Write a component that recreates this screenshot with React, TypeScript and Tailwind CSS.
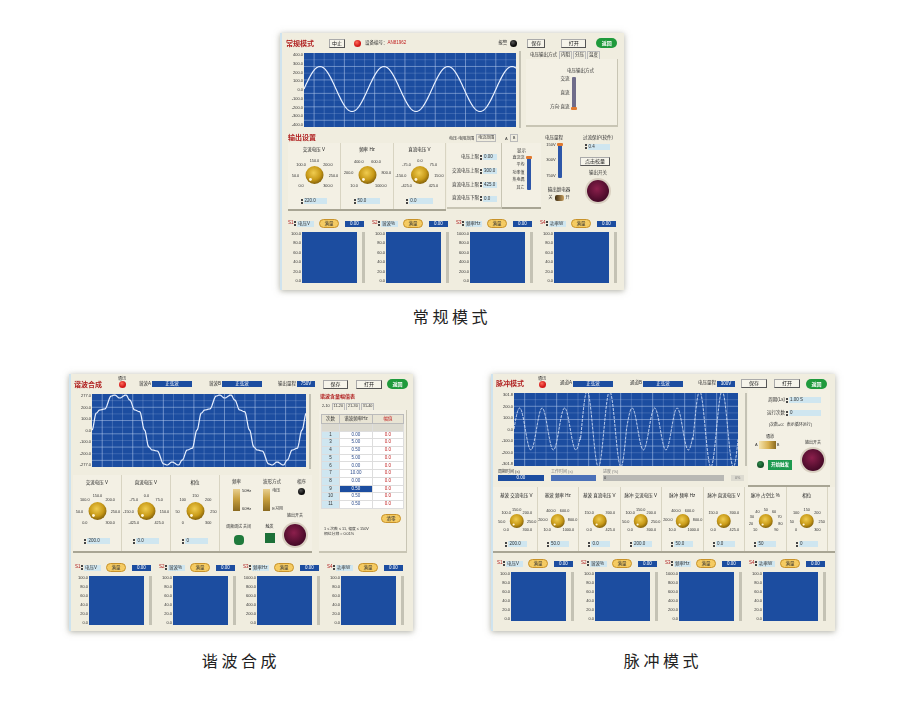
import React from 'react';

const AXIS_GAUGE = ['100.0', '80.0', '60.0', '40.0', '20.0', '0.0'];

const Spin = ({ w, value }: { w: number; value: string }) => (
  <div className="flex items-center gap-[1px] h-[6px]">
    <div className="flex flex-col gap-[1px]">
      <span className="block w-[2px] h-[2px] bg-[#444]" />
      <span className="block w-[2px] h-[2px] bg-[#444]" />
    </div>
    <div className="h-[6px] bg-[#cfe6f0] text-[4.5px] leading-[6px] pl-[1px] text-[#333] overflow-hidden" style={{ width: w }}>
      {value}
    </div>
  </div>
);

const Btn = ({ label, w }: { label: string; w: number }) => (
  <div
    className="h-[9px] bg-[#f6f4ea] border border-[#555] border-l-[#aaa] border-t-[#aaa] text-[5px] leading-[7px] text-center text-[#222]"
    style={{ width: w }}
  >
    {label}
  </div>
);

const Back = () => (
  <div className="w-[21px] h-[10px] rounded-full bg-[#1f9a3c] text-white text-[5px] leading-[10px] text-center font-bold">返回</div>
);

const Led = ({ color = 'red' }: { color?: 'red' | 'black' | 'green' }) => (
  <div
    className={`w-[7px] h-[7px] rounded-full shrink-0 ${
      color === 'red'
        ? 'bg-[radial-gradient(circle_at_40%_35%,#ff6a5a,#d01818_60%)]'
        : color === 'green'
          ? 'bg-[radial-gradient(circle_at_40%_35%,#2e8a4a,#0f4a24_70%)]'
          : 'bg-[radial-gradient(circle_at_40%_35%,#555,#0a0a0a_60%)]'
    }`}
  />
);

const BlueBox = ({ w, label }: { w: number; label: string }) => (
  <div className="h-[6px] bg-[#1c4da0] text-white text-[4.5px] leading-[6px] text-center" style={{ width: w }}>
    {label}
  </div>
);

const Pill = ({ label }: { label: string }) => (
  <div className="w-[20px] h-[9px] rounded-full bg-[#f5cb62] border border-[#c8922a] text-[4.5px] leading-[7px] text-center text-[#333]">
    {label}
  </div>
);

const Stop = () => (
  <div className="w-[22px] h-[22px] rounded-full bg-[radial-gradient(circle_at_45%_40%,#8c1f4c,#470a28_70%)] shadow-[0_0_0_2px_#d8cfc0]" />
);

const Title = ({ text }: { text: string }) => (
  <span className="text-[#b02020] text-[7px] font-bold leading-none whitespace-nowrap">{text}</span>
);

const Axis = ({ labels, w }: { labels: string[]; w: number }) => (
  <div className="flex flex-col justify-between items-end pr-[1px] text-[4px] leading-none text-[#333] shrink-0" style={{ width: w }}>
    {labels.map((l, i) => (
      <span key={i}>{l}</span>
    ))}
  </div>
);

const Scope = ({ w, h, wave, dashed }: { w: number; h: number; wave: (x: number) => number; dashed?: boolean }) => {
  const vCount = 20;
  const hCount = 10;
  const pts: string[] = [];
  for (let x = 0; x <= w; x += 0.5) pts.push(`${x},${wave(x).toFixed(2)}`);
  return (
    <svg width={w} height={h} className="block shrink-0 bg-[#1c4da0]">
      {Array.from({ length: vCount }, (_, i) => {
        const x = ((i + 1) * w) / (vCount + 1);
        return <line key={i} x1={x} x2={x} y1={0} y2={h} stroke="#bcd0f0" strokeOpacity={i % 3 === 0 ? 0.75 : 0.35} strokeWidth={0.7} />;
      })}
      {Array.from({ length: hCount }, (_, i) => {
        const y = ((i + 1) * h) / (hCount + 1);
        return <line key={i} x1={0} x2={w} y1={y} y2={y} stroke="#bcd0f0" strokeOpacity={i % 2 === 1 ? 0.7 : 0.3} strokeWidth={0.7} />;
      })}
      <polyline
        points={pts.join(' ')}
        fill="none"
        stroke="#e8f0ff"
        strokeWidth={dashed ? 0.8 : 1.2}
        strokeDasharray={dashed ? '3 1' : undefined}
      />
    </svg>
  );
};

const Knob = ({
  title,
  labels,
  value,
  w,
  svgH,
  r,
  rx,
  ry,
  titleH,
  panelH,
}: {
  title: string;
  labels: string[];
  value: string;
  w: number;
  svgH: number;
  r: number;
  rx: number;
  ry: number;
  titleH: number;
  panelH: number;
}) => {
  const cx = w / 2;
  const cy = svgH / 2;
  return (
    <div className="flex flex-col items-center shrink-0 border-r border-[#d8d4c2]" style={{ width: w, height: panelH }}>
      <div className="text-[4.5px] text-[#222] flex items-center justify-center whitespace-nowrap" style={{ height: titleH }}>
        {title}
      </div>
      <svg width={w} height={svgH} className="block overflow-visible">
        <defs>
          <radialGradient id="gold" cx="45%" cy="38%" r="65%">
            <stop offset="0%" stopColor="#f0cc50" />
            <stop offset="60%" stopColor="#c89a18" />
            <stop offset="100%" stopColor="#7c5a08" />
          </radialGradient>
        </defs>
        {labels.map((l, i) => {
          const a = ((-135 + (270 * i) / (labels.length - 1)) * Math.PI) / 180;
          return (
            <text key={i} x={cx + rx * Math.sin(a)} y={cy - ry * Math.cos(a) + 1.5} fontSize={3.8} fill="#333" textAnchor="middle">
              {l}
            </text>
          );
        })}
        <circle cx={cx} cy={cy} r={r} fill="url(#gold)" />
        <circle cx={cx - r * 0.45} cy={cy + r * 0.5} r={r * 0.16} fill="#fff6d8" />
      </svg>
      <div className="flex-1 flex items-center">
        <Spin w={w * 0.45} value={value} />
      </div>
    </div>
  );
};

const VSlider = ({ h, track, thumb }: { h: number; track: string; thumb: 'top' | 'bottom' }) => (
  <div className={`w-[4px] rounded-[1px] flex ${thumb === 'top' ? 'items-start' : 'items-end'} justify-center ${track}`} style={{ height: h }}>
    <span className="block w-[6px] h-[3px] rounded-[1px] bg-[#e07a30] shrink-0" />
  </div>
);

const Gauge = ({ name, field, value, axis, plotH, axisW }: { name: string; field: string; value: string; axis: string[]; plotH: number; axisW: number }) => (
  <div className="w-[84px] shrink-0 flex flex-col">
    <div className="flex items-center h-[17px] gap-[1px]">
      <span className="text-[4.5px] text-[#b02020] w-[7px] pl-[2px]">{name}</span>
      <Spin w={17} value={field} />
      <span className="ml-[4px]">
        <Pill label="满量" />
      </span>
      <span className="ml-[5px]">
        <BlueBox w={19} label={value} />
      </span>
    </div>
    <div className="flex" style={{ height: plotH }}>
      <Axis labels={axis} w={axisW} />
      <div className="w-[55px] bg-[#1c4da0] shrink-0" />
      <div className="w-[3px] bg-[#c4c2b4] ml-[5px]" />
    </div>
  </div>
);

const GaugeRow = ({ pad, top, plotH, axisW }: { pad: number; top: number; plotH: number; axisW: number }) => (
  <div className="flex" style={{ paddingLeft: pad, marginTop: top }}>
    <Gauge name="S1" field="电压V" value="0.00" axis={AXIS_GAUGE} plotH={plotH} axisW={axisW} />
    <Gauge name="S2" field="谐波%" value="0.00" axis={AXIS_GAUGE} plotH={plotH} axisW={axisW} />
    <Gauge name="S3" field="频率Hz" value="0.00" axis={['1000.0', '800.0', '600.0', '400.0', '200.0', '0.0']} plotH={plotH} axisW={axisW} />
    <Gauge name="S4" field="功率W" value="0.00" axis={['100.0', '80.0', '60.0', '40.0', '20.0', '0.0']} plotH={plotH} axisW={axisW} />
  </div>
);

const Frame = ({ children }: { children: React.ReactNode }) => (
  <div className="w-[344px] h-[257px] bg-[#f0eddf] border-l-2 border-[#cfe3ee] shadow-[0_1px_6px_rgba(110,110,90,0.55)] blur-[0.45px] overflow-hidden text-[#333] shrink-0">
    {children}
  </div>
);

const LabelSpin = ({ label, value, w }: { label: string; value: string; w: number }) => (
  <div className="flex items-center justify-end gap-[1px]">
    <span className="text-[4.5px] whitespace-nowrap">{label}</span>
    <Spin w={w} value={value} />
  </div>
);

const VOLT = ['0.0', '50.0', '100.0', '150.0', '200.0', '250.0', '300.0'];
const FREQ = ['10.0', '200.0', '400.0', '600.0', '800.0', '1000.0'];

const NormalMode = () => (
  <Frame>
    <div className="h-[20px] flex items-center pl-[4px]">
      <Title text="常规模式" />
      <span className="ml-[15px]">
        <Btn label="中止" w={16} />
      </span>
      <span className="ml-[9px]">
        <Led />
      </span>
      <span className="ml-[4px] text-[4.5px] whitespace-nowrap">
        设备编号：<span className="text-[#c02020]">AN81962</span>
      </span>
      <span className="ml-[92px] text-[4.5px]">报警</span>
      <span className="ml-[3px]">
        <Led color="black" />
      </span>
      <span className="ml-[10px]">
        <Btn label="保存" w={18} />
      </span>
      <span className="ml-[16px]">
        <Btn label="打开" w={25} />
      </span>
      <span className="ml-[10px]">
        <Back />
      </span>
    </div>
    <div className="flex h-[74px]">
      <Axis labels={['400.0', '300.0', '200.0', '100.0', '0.0', '-100.0', '-200.0', '-300.0', '-400.0']} w={22} />
      <Scope w={212} h={74} wave={x => 36 - 22.5 * Math.sin((2 * Math.PI * x) / 64)} />
      <div className="w-[2px] h-[77px] bg-[#c4c2b4] ml-[3px] -mt-[2px]" />
      <div className="w-[92px] h-[77px] -mt-[3px] ml-[5px] flex flex-col">
        <div className="flex items-end h-[9px] text-[4.5px] gap-[1px] pl-[3px] whitespace-nowrap">
          <span className="px-[1px]">电压输出方式</span>
          <span className="px-[1px] border border-b-0 border-[#bbb]">内阻</span>
          <span className="px-[1px] border border-b-0 border-[#bbb]">分压</span>
          <span className="px-[1px] border border-b-0 border-[#bbb]">温度</span>
        </div>
        <div className="flex-1 bg-[#f3f0e4] border-b-2 border-r border-[#c8c5b4] flex flex-col pt-[9px]">
          <span className="text-[4.5px] ml-[41px] self-start">电压输出方式</span>
          <div className="flex gap-[2px] mt-[2px] ml-[24px] self-start">
            <div className="flex flex-col justify-between items-end text-[4.5px] h-[33px] leading-none">
              <span>交流</span>
              <span>直流</span>
              <span>方向·直流</span>
            </div>
            <VSlider h={33} track="bg-[#6f6c8a]" thumb="bottom" />
          </div>
        </div>
      </div>
    </div>
    <div className="flex pl-[6px] mt-[4px] h-[80px]">
      <div className="w-[158px] shrink-0">
        <div className="h-[12px] flex items-center">
          <Title text="输出设置" />
        </div>
        <div className="flex bg-[#f3f0e4] border-b-2 border-[#a8a594]">
          <Knob title="交流电压 V" labels={VOLT} value="220.0" w={53} svgH={36} r={9} rx={19} ry={15} titleH={14} panelH={66} />
          <Knob title="频率 Hz" labels={FREQ} value="50.0" w={53} svgH={36} r={9} rx={19} ry={15} titleH={14} panelH={66} />
          <Knob title="直流电压 V" labels={['-425.0', '-150.0', '-75.0', '0.0', '75.0', '150.0', '425.0']} value="0.0" w={52} svgH={36} r={9} rx={19} ry={15} titleH={14} panelH={66} />
        </div>
      </div>
      <div className="w-[55px] ml-[1px] shrink-0">
        <div className="h-[12px] flex items-end text-[4px] gap-[2px] pb-[1px] whitespace-nowrap pl-[2px]">
          <span>电压·电阻范围</span>
          <span className="border border-[#bbb] px-[1px]">电流范围</span>
        </div>
        <div className="h-[66px] bg-[#f3f0e4] border-b-2 border-r border-[#c8c5b4] flex flex-col gap-[7px] pt-[11px] pr-[4px]">
          <LabelSpin label="电压上限" value="0.00" w={14} />
          <LabelSpin label="交流电压上限" value="300.0" w={14} />
          <LabelSpin label="直流电压上限" value="425.0" w={14} />
          <LabelSpin label="直流电压下限" value="0.0" w={14} />
        </div>
      </div>
      <div className="w-[39px] shrink-0">
        <div className="h-[12px] flex items-end text-[4px] gap-[2px] pb-[1px] pl-[3px]">
          <span>A</span>
          <span className="border border-[#bbb] px-[2px]">B</span>
        </div>
        <div className="h-[66px] bg-[#f3f0e4] border-b-2 border-[#a8a594] flex flex-col items-center pt-[5px]">
          <span className="text-[4.5px]">显示</span>
          <div className="flex gap-[2px] mt-[1px]">
            <div className="flex flex-col justify-between items-end text-[4px] h-[34px] leading-none">
              <span>直流流</span>
              <span>平均</span>
              <span>功率值</span>
              <span>热电偶</span>
              <span>其它</span>
            </div>
            <VSlider h={34} track="bg-[#2d56a8]" thumb="top" />
          </div>
        </div>
      </div>
      <div className="flex-1 flex pt-[4px]">
        <div className="w-[26px] flex flex-col items-center">
          <span className="text-[4.5px] whitespace-nowrap">电压量程</span>
          <div className="flex gap-[2px] mt-[1px]">
            <div className="flex flex-col justify-between items-end text-[4px] h-[35px] leading-none">
              <span>150V</span>
              <span>300V</span>
              <span>750V</span>
            </div>
            <VSlider h={35} track="bg-[#2d56a8]" thumb="top" />
          </div>
          <span className="text-[4.5px] mt-[9px] ml-[10px] whitespace-nowrap">输出继电器</span>
          <div className="flex items-center gap-[2px] text-[4px] mt-[1px] ml-[10px]">
            <span>关</span>
            <span className="block w-[9px] h-[6px] rounded-[2px] bg-[linear-gradient(90deg,#3a2a10,#c8a060)] shrink-0" />
            <span>开</span>
          </div>
        </div>
        <div className="flex-1 flex flex-col items-center pl-[5px]">
          <span className="text-[4.5px] whitespace-nowrap">过流保护(软件)</span>
          <span className="mt-[2px] -ml-[2px]">
            <Spin w={22} value="0.4" />
          </span>
          <span className="mt-[7px] -ml-[6px]">
            <Btn label="点击校量" w={30} />
          </span>
          <span className="text-[4.5px] mt-[4px]">输出开关</span>
          <span className="mt-[3px]">
            <Stop />
          </span>
        </div>
      </div>
    </div>
    <GaugeRow pad={4} top={4} plotH={51} axisW={16} />
  </Frame>
);

const HARMONICS = [
  ['', '', ''],
  ['1', '0.00', '0.0'],
  ['3', '5.00', '0.0'],
  ['4', '0.50', '0.0'],
  ['5', '5.00', '0.0'],
  ['6', '0.00', '0.0'],
  ['7', '10.00', '0.0'],
  ['8', '0.00', '0.0'],
  ['9', '0.50', '0.0'],
  ['10', '0.50', '0.0'],
  ['11', '0.50', '0.0'],
];

const Toggle = ({ a, b }: { a: string; b: string }) => (
  <div className="flex items-stretch gap-[2px] h-[22px]">
    <div className="w-[7px] bg-[linear-gradient(180deg,#e8cf90_0%,#c8a040_45%,#8a6a20_100%)]" />
    <div className="flex flex-col justify-between text-[4px] leading-none">
      <span>{a}</span>
      <span>{b}</span>
    </div>
  </div>
);

// half cycle of the composite wave, read off the screenshot as [x, y] in plot pixels
const HALF_WAVE = [
  [0, 36],
  [4.3, 19],
  [7.7, 16],
  [12.7, 15],
  [19.3, 2],
  [22.7, 1],
  [27.5, 4],
  [34, 1],
  [37.7, 6],
  [42.7, 16],
  [47.7, 17.7],
  [52.5, 36],
];

const compositeWave = (x: number) => {
  const half = 52.5;
  const n = Math.floor(x / half);
  const px = x - n * half;
  let y = 36;
  for (let i = 0; i < HALF_WAVE.length - 1; i++) {
    const [x0, y0] = HALF_WAVE[i];
    const [x1, y1] = HALF_WAVE[i + 1];
    if (px >= x0 && px <= x1) {
      const t = (1 - Math.cos((Math.PI * (px - x0)) / (x1 - x0))) / 2;
      y = y0 + (y1 - y0) * t;
      break;
    }
  }
  return n % 2 === 0 ? y : 72 - y;
};

const HarmonicMode = () => (
  <Frame>
    <div className="h-[20px] flex items-center pl-[3px]">
      <Title text="谐波合成" />
      <div className="ml-[16px] flex flex-col items-center -mt-[5px]">
        <span className="text-[4px] leading-[5px]">通讯</span>
        <Led />
      </div>
      <span className="ml-[13px] text-[4.5px] whitespace-nowrap">谐波A</span>
      <span className="ml-[1px]">
        <BlueBox w={40} label="正弦波" />
      </span>
      <span className="ml-[17px] text-[4.5px] whitespace-nowrap">谐波B</span>
      <span className="ml-[1px]">
        <BlueBox w={40} label="正弦波" />
      </span>
      <span className="ml-[16px] text-[4.5px] whitespace-nowrap">输出量程</span>
      <span className="ml-[1px]">
        <BlueBox w={18} label="750V" />
      </span>
      <span className="ml-[8px]">
        <Btn label="保存" w={25} />
      </span>
      <span className="ml-[8px]">
        <Btn label="打开" w={26} />
      </span>
      <span className="ml-[5px]">
        <Back />
      </span>
    </div>
    <div className="flex h-[159px]">
      <div className="w-[244px] shrink-0">
        <div className="flex h-[73px]">
          <Axis labels={['277.0', '200.0', '100.0', '0.0', '-100.0', '-200.0', '-277.0']} w={21} />
          <Scope w={214} h={73} wave={compositeWave} />
          <div className="w-[2px] h-[75px] bg-[#c4c2b4] ml-[3px]" />
        </div>
        <div className="mt-[8px] ml-[2px] w-[239px] h-[78px] flex bg-[#f3f0e4] border-b-2 border-[#a8a594]">
          <Knob title="交流电压 V" labels={VOLT} value="200.0" w={49} svgH={40} r={9} rx={18} ry={16} titleH={16} panelH={76} />
          <Knob title="直流电压 V" labels={['-425.0', '-150.0', '-75.0', '0.0', '75.0', '150.0', '425.0']} value="0.0" w={49} svgH={40} r={9} rx={18} ry={16} titleH={16} panelH={76} />
          <Knob title="相位" labels={['0', '50', '100', '150', '200', '250', '300']} value="0" w={49} svgH={40} r={9} rx={18} ry={16} titleH={16} panelH={76} />
          <div className="flex-1 flex flex-col px-[6px] pt-[4px]">
            <div className="flex justify-between text-[4.5px]">
              <span className="ml-[6px]">频率</span>
              <span className="ml-[6px]">波形方式</span>
              <span>相序</span>
            </div>
            <div className="flex items-start gap-[12px] mt-[3px] pl-[7px]">
              <Toggle a="50Hz" b="60Hz" />
              <Toggle a="电压" b="E习用" />
              <span className="-mt-[1px] ml-[3px]">
                <Led color="black" />
              </span>
            </div>
            <div className="flex items-start justify-between mt-[2px]">
              <div className="flex flex-col items-center mt-[11px]">
                <span className="text-[4px] whitespace-nowrap">调频调试 关闭</span>
                <span className="block w-[10px] h-[10px] rounded-[4px] bg-[#1f7a3c] mt-[5px]" />
              </div>
              <div className="flex flex-col items-center mt-[11px] ml-[4px]">
                <span className="text-[4px]">触发</span>
                <span className="block w-[10px] h-[10px] bg-[#1c7038] mt-[3px]" />
              </div>
              <div className="flex flex-col items-center gap-[5px] mt-0">
                <span className="text-[4px] whitespace-nowrap">输出开关</span>
                <Stop />
              </div>
            </div>
          </div>
        </div>
      </div>
      <div className="flex-1 flex flex-col ml-[4px] -mt-[3px] pr-[7px]">
        <div className="pl-[1px] h-[11px] flex items-center">
          <span className="text-[#b02020] text-[5px] font-bold whitespace-nowrap">谐波含量幅值表</span>
        </div>
        <div className="flex items-end h-[8px] text-[3.8px] gap-[1px] pl-[2px] whitespace-nowrap">
          <span className="px-[1px]">2-10</span>
          <span className="px-[1px] border border-b-0 border-[#bbb]">11-20</span>
          <span className="px-[1px] border border-b-0 border-[#bbb]">21-30</span>
          <span className="px-[1px] border border-b-0 border-[#bbb]">31-40</span>
        </div>
        <div className="flex-1 bg-[#f3f0e4] border-r border-b-2 border-[#c8c5b4] pt-[4px] px-[2px] flex flex-col">
          <table className="w-[83px] table-fixed border-collapse text-[4.5px] bg-[#dcd9c8]">
            <thead>
              <tr className="h-[9px]">
                <th className="w-[18px] font-normal bg-[#e8e4d4] border border-[#bbb]">次数</th>
                <th className="w-[33px] font-normal bg-[#e8e4d4] border border-[#bbb]">谐波频率Hz</th>
                <th className="font-normal text-[#c02020] bg-[#e8e4d4] border border-[#bbb]">幅值</th>
              </tr>
            </thead>
            <tbody>
              {HARMONICS.map((row, i) => (
                <tr key={i} className="h-[7.7px]">
                  <td className={`text-center leading-none border border-[#ddd] ${i === 0 ? 'bg-[#dcdad0]' : 'bg-[#cfe6f0]'}`}>{row[0]}</td>
                  <td className={`text-center leading-none border border-[#ddd] ${i === 0 ? 'bg-[#dcdad0]' : i === 8 ? 'bg-[#1c4da0] text-white' : 'bg-white text-[#2a4a8a]'}`}>{row[1]}</td>
                  <td className={`text-center leading-none border border-[#ddd] text-[#c02020] ${i === 0 ? 'bg-[#dcdad0]' : 'bg-white'}`}>{row[2]}</td>
                </tr>
              ))}
            </tbody>
          </table>
          <div className="flex justify-end mt-[5px] pr-[3px]">
            <Pill label="清零" />
          </div>
          <div className="text-[3.8px] leading-[5px] mt-[4px] whitespace-nowrap pl-[3px]">
            <div>1 ≤ 次数 ≤ 11, 幅度 ≤ 150V</div>
            <div>相位分辨 ≈ 0.01%</div>
          </div>
        </div>
      </div>
    </div>
    <GaugeRow pad={2} top={6} plotH={49} axisW={16} />
  </Frame>
);

const pulseWave = (x: number) => {
  const period = 22.5;
  const amp = x % (period * 5) < period * 3 - 1 ? 21 : 38;
  return 36 - amp * Math.sin((2 * Math.PI * x) / period);
};

const PulseMode = () => (
  <Frame>
    <div className="h-[19px] flex items-center pl-[3px]">
      <Title text="脉冲模式" />
      <div className="ml-[14px] flex flex-col items-center -mt-[3px]">
        <span className="text-[4px] leading-[5px]">通讯</span>
        <Led />
      </div>
      <span className="ml-[14px] text-[4.5px] whitespace-nowrap">通道A</span>
      <span className="ml-[1px]">
        <BlueBox w={40} label="正弦波" />
      </span>
      <span className="ml-[17px] text-[4.5px] whitespace-nowrap">通道B</span>
      <span className="ml-[1px]">
        <BlueBox w={40} label="正弦波" />
      </span>
      <span className="ml-[15px] text-[4.5px] whitespace-nowrap">电压量程</span>
      <span className="ml-[1px]">
        <BlueBox w={18} label="300V" />
      </span>
      <span className="ml-[6px]">
        <Btn label="保存" w={26} />
      </span>
      <span className="ml-[7px]">
        <Btn label="打开" w={26} />
      </span>
      <span className="ml-[6px]">
        <Back />
      </span>
    </div>
    <div className="flex h-[94px]">
      <div className="w-[251px] shrink-0">
        <div className="flex h-[73px]">
          <Axis labels={['301.8', '200.0', '100.0', '0.0', '-100.0', '-200.0', '-301.8']} w={21} />
          <Scope w={224} h={73} wave={pulseWave} dashed />
        </div>
        <div className="flex gap-[7px] pl-[5px] mt-[3px]">
          <div className="w-[46px]">
            <div className="text-[4px] leading-[6px]">周期时间 (s)</div>
            <BlueBox w={46} label="0.00" />
          </div>
          <div className="w-[46px]">
            <div className="text-[4px] leading-[6px] text-[#777]">工作时间 (s)</div>
            <div className="h-[6px] bg-[#4a70b8]" />
          </div>
          <div className="w-[124px]">
            <div className="text-[4px] leading-[6px] text-[#777]">进度 (%)</div>
            <div className="h-[6px] bg-[#b8b8b4] pl-[1px] text-[4px] leading-[6px]">0</div>
          </div>
          <div className="w-[13px] mt-[6px] h-[6px] bg-[#dcdad0] text-[3.8px] leading-[6px] text-center text-[#777]">0%</div>
        </div>
      </div>
      <div className="w-[2px] h-[73px] bg-[#c4c2b4] ml-[1px]" />
      <div className="w-[82px] h-[97px] -mt-[3px] ml-[1px] bg-[#f3f0e4] border-b-2 border-[#a8a594] flex flex-col pt-[7px]">
        <div className="flex flex-col items-end gap-[6px] pr-[9px]">
          <LabelSpin label="周期(Ls)" value="1.00 S" w={32} />
          <LabelSpin label="运行次数" value="0" w={32} />
        </div>
        <div className="text-[4px] text-right pr-[18px] mt-[5px] whitespace-nowrap">(次数=0：表示循环运行)</div>
        <div className="flex items-start mt-[6px] pl-[5px]">
          <div className="flex flex-col flex-1">
            <span className="text-[4px] pl-[13px]">通道</span>
            <div className="flex items-center gap-[1px] text-[4px] pl-[2px] mt-[1px]">
              <span>A</span>
              <span className="block w-[17px] h-[8px] bg-[linear-gradient(90deg,#f4e4b0,#d8b050_55%,#8a6a20)] shrink-0" />
              <span>B</span>
            </div>
            <div className="flex items-center gap-[4px] mt-[11px] pl-[4px]">
              <Led color="green" />
              <span className="w-[24px] h-[10px] bg-[#1e9a50] text-white text-[4.5px] leading-[10px] text-center font-bold whitespace-nowrap">开始触发</span>
            </div>
          </div>
          <div className="flex flex-col items-center gap-[3px] pr-[6px] mt-[6px]">
            <span className="text-[4px] whitespace-nowrap">输出开关</span>
            <Stop />
          </div>
        </div>
      </div>
    </div>
    <div className="flex pl-[3px] h-[66px] bg-[#f3f0e4] border-b-2 border-[#a8a594]">
      {[
        ['基波 交流电压 V', VOLT, '200.0'],
        ['基波 频率 Hz', FREQ, '50.0'],
        ['基波 直流电压 V', ['0.0', '150.0', '300.0', '425.0'], '0.0'],
        ['脉冲 交流电压 V', VOLT, '200.0'],
        ['脉冲 频率 Hz', FREQ, '50.0'],
        ['脉冲 直流电压 V', ['0.0', '150.0', '300.0', '425.0'], '0.0'],
        ['脉冲 占空比 %', ['10', '20', '30', '40', '50', '60', '70', '80', '90'], '50'],
        ['相位', ['0', '50', '100', '150', '200', '250', '300'], '0'],
      ].map(([t, l, v], i) => (
        <Knob
          key={i}
          title={t as string}
          labels={l as string[]}
          value={v as string}
          w={41.5}
          svgH={32}
          r={7}
          rx={15}
          ry={12}
          titleH={18}
          panelH={64}
        />
      ))}
    </div>
    <GaugeRow pad={2} top={2} plotH={49} axisW={16} />
  </Frame>
);

const Caption = ({ text }: { text: string }) => (
  <div className="text-[16px] leading-[20px] tracking-[3.6px] text-[#222] text-center">{text}</div>
);

export default function App() {
  return (
    <div className="w-[900px] h-[707px] bg-white pt-[33px] overflow-hidden font-['Liberation_Sans','Noto_Sans_CJK_SC',sans-serif]">
      <div className="w-[344px] ml-[280px]">
        <NormalMode />
        <div className="mt-[18px]">
          <Caption text="常规模式" />
        </div>
      </div>
      <div className="flex gap-[78px] pl-[69px] mt-[46px]">
        <div className="w-[344px]">
          <HarmonicMode />
          <div className="mt-[21px]">
            <Caption text="谐波合成" />
          </div>
        </div>
        <div className="w-[344px]">
          <PulseMode />
          <div className="mt-[21px]">
            <Caption text="脉冲模式" />
          </div>
        </div>
      </div>
    </div>
  );
}
